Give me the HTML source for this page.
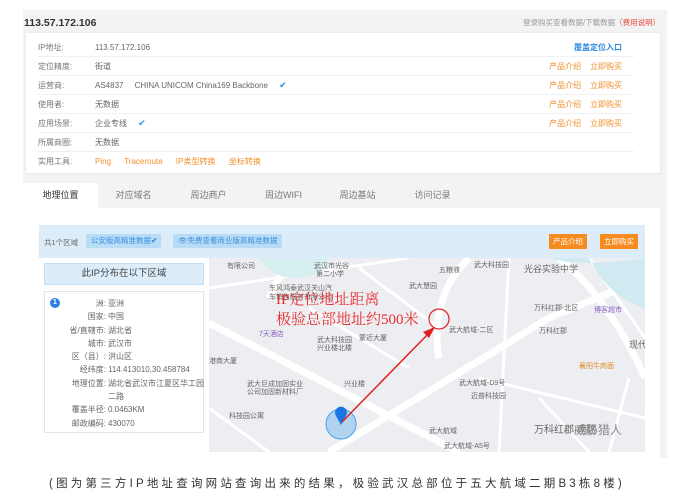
<!DOCTYPE html>
<html><head><meta charset="utf-8"><style>
*{margin:0;padding:0;box-sizing:border-box}
body{width:674px;height:503px;background:#fff;font-family:"Liberation Sans","Noto Sans CJK SC",sans-serif;position:relative;overflow:hidden;color:#666}
.abs{position:absolute}
.panel{left:23px;top:10px;width:644px;height:448px;background:#f3f3f3}
.card{left:26px;top:33px;width:634px;height:140px;background:#fff;box-shadow:0 0 2px #ddd}
.row{position:absolute;left:12px;height:19px;font-size:8px;line-height:19px;border-bottom:1px solid #f0f0f0;width:596px}
.row .l{position:absolute;left:0;color:#777}
.row .v{position:absolute;left:57px;color:#666}
.row .r{position:absolute;right:12px;color:#f0902a}
.row .v.or,.or{color:#f0902a}
.tab{position:absolute;top:183px;height:25px;line-height:25px;font-size:9px;color:#777;text-align:center;width:75px}
.content{left:23px;top:208px;width:637px;height:250px;background:#fff}
.chk{color:#2f8ae0;font-size:9px}
.info{font-size:8px;color:#666;line-height:13.3px}
.info div{position:relative;height:13.3px}
.info span.k{position:absolute;right:98px;text-align:right}
.info span.v{position:absolute;left:64px;white-space:nowrap}
</style></head><body>
<div class="abs panel"></div>
<div class="abs" style="left:24px;top:17px;font-size:10.5px;font-weight:bold;color:#333">113.57.172.106</div>
<div class="abs" style="left:523px;top:17px;font-size:7.5px;color:#999">登录购买查看数据/下载数据<span style="color:#e8493f">（费用说明）</span></div>
<div class="abs card">
<div class="row" style="top:5px"><span class="l">IP地址:</span><span class="v">113.57.172.106</span><span class="r" style="color:#2f8ae0;font-weight:bold">覆盖定位入口</span></div>
<div class="row" style="top:24px"><span class="l">定位精度:</span><span class="v">街道</span><span class="r">产品介绍&nbsp;&nbsp;&nbsp; 立即购买</span></div>
<div class="row" style="top:43px"><span class="l">运营商:</span><span class="v">AS4837 &nbsp;&nbsp;&nbsp; CHINA UNICOM China169 Backbone &nbsp;&nbsp;&nbsp; <span class="chk">✔</span></span><span class="r">产品介绍&nbsp;&nbsp;&nbsp; 立即购买</span></div>
<div class="row" style="top:62px"><span class="l">使用者:</span><span class="v">无数据</span><span class="r">产品介绍&nbsp;&nbsp;&nbsp; 立即购买</span></div>
<div class="row" style="top:81px"><span class="l">应用场景:</span><span class="v">企业专线 &nbsp;&nbsp;&nbsp; <span class="chk">✔</span></span><span class="r">产品介绍&nbsp;&nbsp;&nbsp; 立即购买</span></div>
<div class="row" style="top:100px"><span class="l">所属商圈:</span><span class="v">无数据</span></div>
<div class="row" style="top:119px;border:none"><span class="l">实用工具:</span><span class="v or">Ping &nbsp;&nbsp;&nbsp;&nbsp; Traceroute &nbsp;&nbsp;&nbsp;&nbsp; IP类型转换 &nbsp;&nbsp;&nbsp;&nbsp; 坐标转换</span></div>
</div>
<div class="abs" style="left:23px;top:183px;width:75px;height:26px;background:#fff"></div>
<div class="tab" style="left:23px;color:#333">地理位置</div>
<div class="tab" style="left:96px">对应域名</div>
<div class="tab" style="left:171px">周边商户</div>
<div class="tab" style="left:246px">周边WIFI</div>
<div class="tab" style="left:320px">周边基站</div>
<div class="tab" style="left:395px">访问记录</div>
<div class="abs content"></div>
<div class="abs" style="left:39px;top:225px;width:606px;height:33px;background:#dcedf9"></div>
<div class="abs" style="left:44px;top:237px;font-size:7.5px;color:#666">共1个区域</div>
<div class="abs" style="left:86px;top:234px;width:75px;height:14px;background:#b8dcf5;font-size:7.5px;line-height:14px;color:#3a8fe0;padding-left:5px">公安版高精准数据<b>✔</b></div>
<div class="abs" style="left:173px;top:234px;width:109px;height:14px;background:#b8dcf5;font-size:7.5px;line-height:14px;color:#3a8fe0;padding-left:5px">👁免费查看商业版高精准数据</div>
<div class="abs" style="left:549px;top:234px;width:38px;height:15px;background:#f68b1f;color:#fff;font-size:7.5px;line-height:15px;text-align:center">产品介绍</div>
<div class="abs" style="left:600px;top:234px;width:38px;height:15px;background:#f68b1f;color:#fff;font-size:7.5px;line-height:15px;text-align:center">立即购买</div>
<div class="abs" style="left:44px;top:263px;width:160px;height:22px;background:#dcedf9;border:1px solid #c5e0f4;font-size:9.5px;line-height:20px;text-align:center;color:#444">此IP分布在以下区域</div>
<div class="abs" style="left:44px;top:291px;width:160px;height:142px;border:1px solid #e3e3e3"></div>
<div class="abs" style="left:50px;top:298px;width:10px;height:10px;border-radius:50%;background:#2f7fe8;color:#fff;font-size:7px;line-height:10px;text-align:center;font-weight:bold">1</div>
<div class="abs info" style="left:44px;top:297px;width:160px">
<div><span class="k">洲:</span><span class="v">亚洲</span></div>
<div><span class="k">国家:</span><span class="v">中国</span></div>
<div><span class="k">省/直辖市:</span><span class="v">湖北省</span></div>
<div><span class="k">城市:</span><span class="v">武汉市</span></div>
<div><span class="k">区（县）:</span><span class="v">洪山区</span></div>
<div><span class="k">经纬度:</span><span class="v">114.413010,30.458784</span></div>
<div><span class="k">地理位置:</span><span class="v">湖北省武汉市江夏区华工园</span></div>
<div><span class="k"></span><span class="v">二路</span></div>
<div><span class="k">覆盖半径:</span><span class="v">0.0463KM</span></div>
<div><span class="k">邮政编码:</span><span class="v">430070</span></div>
</div>
<svg class="abs" style="left:209px;top:258px" width="436" height="194" viewBox="0 0 436 194">
<rect width="436" height="194" fill="#eceef2"/>
<g stroke="#fff" stroke-width="7" fill="none">
<path d="M0 65 L250 194"/>
<path d="M120 194 L340 60 L436 20"/>
<path d="M350 0 Q400 40 436 120"/>
<path d="M260 0 Q220 40 230 100"/>
<path d="M80 0 L60 40"/>
</g>
<g stroke="#fff" stroke-width="3" fill="none">
<path d="M0 30 L200 0"/><path d="M100 50 L200 110"/><path d="M270 120 L436 160"/>
<path d="M300 0 L290 194"/><path d="M330 140 L380 194"/><path d="M380 0 L436 80"/>
<path d="M150 10 L230 70"/><path d="M0 150 L60 194"/><path d="M420 120 L400 194"/>
</g>
<path d="M340 0 Q370 10 436 0 L436 50 Q400 40 380 0Z" fill="#cfeaf0"/>
<path d="M50 0 Q70 30 110 15 L120 0Z" fill="#d6eff1"/>
<g font-size="7" fill="#666" font-family="Liberation Sans,Noto Sans CJK SC,sans-serif">
<text x="18" y="10">有限公司</text><text x="105" y="10">武汉市光谷</text><text x="107" y="18">第二小学</text>
<text x="60" y="32">东风鸿泰武汉关山汽</text><text x="60" y="41">车销售服务有限公司</text>
<text x="230" y="14">五粮液</text><text x="200" y="30">武大慧园</text><text x="265" y="9">武大科技园</text>
<text x="240" y="74">武大航域-二区</text><text x="315" y="14" font-size="9">光谷实验中学</text>
<text x="385" y="54" fill="#8a5cc0">博客超市</text><text x="325" y="52">万科红郡-北区</text><text x="330" y="75">万科红郡</text>
<text x="50" y="78" fill="#8a5cc0">7天酒店</text><text x="108" y="84">武大科技园</text><text x="108" y="92">兴业楼北楼</text>
<text x="0" y="105">港商大厦</text><text x="135" y="128">兴业楼</text>
<text x="38" y="128">武大巨成加固实业</text><text x="38" y="136">公司加固新材料厂</text>
<text x="20" y="160">科技园公寓</text><text x="250" y="127">武大航域-D9号</text><text x="262" y="140">迈普科技园</text>
<text x="220" y="175">武大航域</text><text x="235" y="190">武大航域-A5号</text><text x="150" y="82">蒙近大厦</text>
<text x="370" y="110" fill="#e08a20">襄阳牛肉面</text><text x="420" y="90" font-size="9">现代</text>
<text x="325" y="175" font-size="10">万科红郡-南区</text>
</g>
<circle cx="132" cy="166" r="15" fill="#7fc0ee" fill-opacity=".55" stroke="#4aa0e8"/>
<path d="M132 167 L127 158 A6 6 0 1 1 137 158Z" fill="#1b74e4"/>
<line x1="133" y1="164" x2="222" y2="73" stroke="#e02020" stroke-width="1.5"/>
<path d="M226 69 L214 74 L220 80Z" fill="#e02020"/>
<circle cx="230" cy="61" r="10" fill="none" stroke="#e02020" stroke-width="1.2"/>
<g fill="#e83030" font-family="Liberation Serif,Noto Serif CJK SC,serif" font-size="15">
<text x="67" y="46">IP定位地址距离</text><text x="67" y="66">极验总部地址约500米</text>
</g>
<text x="355" y="176" font-size="12" fill="#888" font-family="Noto Sans CJK SC,sans-serif">⌾ 威胁猎人</text>
</svg>
<div class="abs" style="left:0;top:475px;width:674px;text-align:center;font-size:11.5px;color:#333;letter-spacing:3.2px">(图为第三方IP地址查询网站查询出来的结果，极验武汉总部位于五大航域二期B3栋8楼)</div>
</body></html>
